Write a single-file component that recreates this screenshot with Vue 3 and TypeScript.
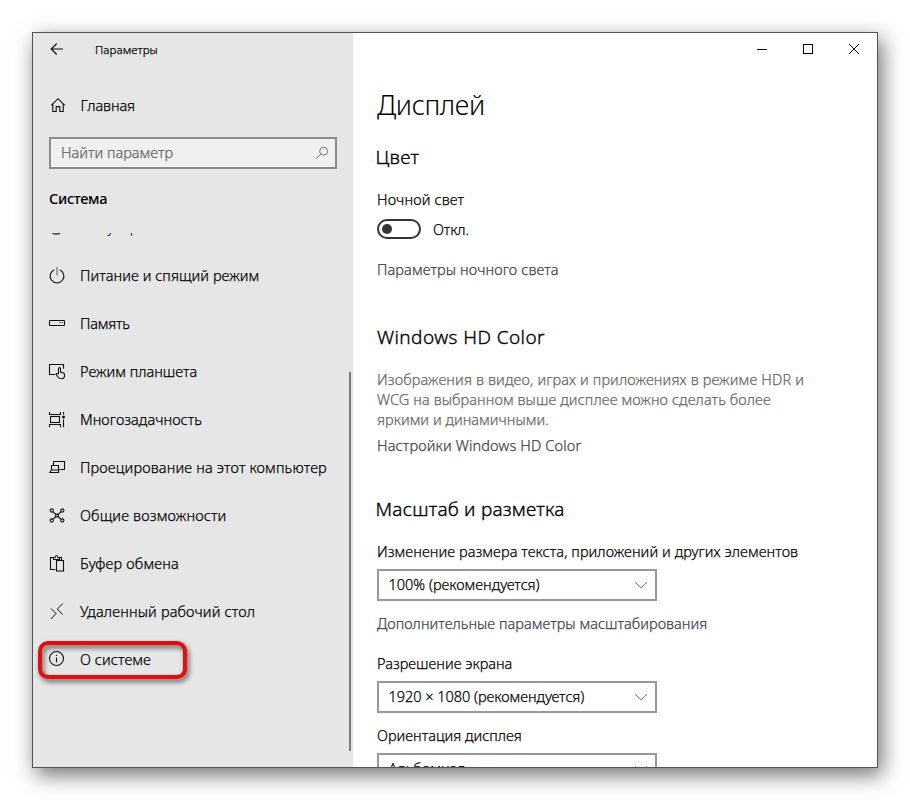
<script setup lang="ts">
interface NavItem {
  label: string
  icon: string
  spacing: number
  marked?: boolean
}

const items: NavItem[] = [
  { label: 'Фокусировка внимания', icon: 'moon', spacing: 0.12 },
  { label: 'Питание и спящий режим', icon: 'power', spacing: 0.06 },
  { label: 'Память', icon: 'storage', spacing: -0.2 },
  { label: 'Режим планшета', icon: 'tablet', spacing: 0.02 },
  { label: 'Многозадачность', icon: 'multitask', spacing: 0.06 },
  { label: 'Проецирование на этот компьютер', icon: 'project', spacing: 0.17 },
  { label: 'Общие возможности', icon: 'shared', spacing: 0.17 },
  { label: 'Буфер обмена', icon: 'clipboard', spacing: 0.18 },
  { label: 'Удаленный рабочий стол', icon: 'remote', spacing: 0.16 },
  { label: 'О системе', icon: 'info', spacing: 0.08, marked: true },
]
</script>

<template>
  <div class="desktop">
    <div class="window">
      <aside class="sidebar">
        <header class="titlebar">
          <svg class="back" width="14" height="14" viewBox="0 0 14 14">
            <path d="M13 7H1.5M6.7 1.5L1.2 7l5.5 5.5" />
          </svg>
          <span class="app-title">Параметры</span>
        </header>

        <a class="home">
          <svg class="home-icon" width="16" height="16" viewBox="0 0 16 16">
            <path d="M1.2 8.3L8 1.7l6.8 6.6M2.8 7v7.5h3.4V9.6h3.6v4.9h3.4V7" />
          </svg>
          <span class="home-label">Главная</span>
        </a>

        <div class="search">
          <span>Найти параметр</span>
          <svg width="14" height="14" viewBox="0 0 14 14">
            <circle cx="8.6" cy="5.2" r="4" />
            <path d="M5.7 8.1L1 12.8" />
          </svg>
        </div>

        <h2 class="section">Система</h2>

        <nav class="nav">
          <a v-for="item in items" :key="item.label" class="nav-item">
            <svg class="icon" width="16" height="16" viewBox="0 0 16 16">
              <path v-if="item.icon === 'moon'" d="M3.5 2a6.6 6.6 0 1 0 9.5 8.5A6.6 6.6 0 0 1 3.5 2z" />
              <template v-else-if="item.icon === 'power'">
                <path d="M5.3 1.7a6.9 6.9 0 1 0 5.4 0" />
                <path class="soft" d="M8 -1v8.5" />
              </template>
              <template v-else-if="item.icon === 'storage'">
                <rect x="0.5" y="4.5" width="15" height="5" rx="0.6" />
                <path d="M10.6 6.5h1M12.7 6.5h1" />
              </template>
              <template v-else-if="item.icon === 'tablet'">
                <path d="M6.2 10.5H0.5V0.5h14v4.3" />
                <path d="M9.5 9.8V4.5a1 1 0 0 1 2 0v3.6l2.3.5q1.7.3 1.7 1.9v1.300q0 3-3.200 3-2.200 0-3.400-1.800L7.200 10.500q-.3-1.300 1-1z" />
              </template>
              <template v-else-if="item.icon === 'multitask'">
                <rect x="1.5" y="4.5" width="9" height="6" />
                <path d="M0.5 0v2.5h11V0M0.5 15.2v-2.7h11v2.7M14.5 0v2.5M14.5 7.5v7.7" />
                <circle class="fill" cx="14.5" cy="5" r="1.5" />
              </template>
              <template v-else-if="item.icon === 'project'">
                <path d="M4.5 5.5v-4h11v8h-5.2" />
                <path d="M2.5 9.5v-4h7v4M0.8 12.5l1.6-2.5h7.2v2.5z" />
              </template>
              <template v-else-if="item.icon === 'shared'">
                <circle cx="2.7" cy="2.5" r="1.6" />
                <circle cx="13.3" cy="2.5" r="1.6" />
                <circle cx="2.7" cy="12.5" r="1.6" />
                <circle cx="13.3" cy="12.5" r="1.6" />
                <circle cx="8" cy="7.5" r="1.4" />
                <path d="M3.8 3.6l3.2 2.9M12.2 3.6L9 6.5M3.8 11.4L7 8.5M12.2 11.4L9 8.5" />
              </template>
              <template v-else-if="item.icon === 'clipboard'">
                <path d="M6.3 13.5H1.5v-12h3M10.5 1.5h2v3M4.5 3.5v-2h1.7Q6.3-.5 7.5-.5t1.3 2h1.7v2z" />
                <rect x="7.5" y="4.5" width="7" height="10.5" />
              </template>
              <path
                v-else-if="item.icon === 'remote'"
                class="thin"
                d="M2 4.5l5 5-5 5.5M13.8 -0.5L8.3 5l5.3 5.5"
              />
              <template v-else>
                <circle cx="7.5" cy="6.5" r="7" />
                <path d="M7.5 5.5v4.8M7.5 2.8v1.3" />
              </template>
            </svg>
            <span class="nav-label" :style="{ letterSpacing: item.spacing + 'px' }">{{ item.label }}</span>
            <i v-if="item.marked" class="marker"></i>
          </a>
          <span class="scrollbar"></span>
        </nav>
      </aside>

      <main class="content">
        <div class="controls">
          <svg width="46" height="32" viewBox="0 0 46 32"><path d="M18 16.5h10" /></svg>
          <svg width="46" height="32" viewBox="0 0 46 32"><rect x="18.5" y="11.5" width="9" height="9" /></svg>
          <svg width="46" height="32" viewBox="0 0 46 32"><path d="M18 11l10 10M28 11L18 21" /></svg>
        </div>

        <h1>Дисплей</h1>

        <h3 class="color-heading">Цвет</h3>
        <p class="night">Ночной свет</p>
        <div class="toggle-row">
          <span class="toggle"></span>
          <span class="toggle-text">Откл.</span>
        </div>
        <a class="link night-link">Параметры ночного света</a>

        <h3 class="hd-heading">Windows HD Color</h3>
        <p class="note">
          <span class="note-1">Изображения в видео, играх и приложениях в режиме HDR и</span>
          <span class="note-2">WCG на выбранном выше дисплее можно сделать более</span>
          <span class="note-3">яркими и динамичными.</span>
        </p>
        <a class="link hd-link">Настройки Windows HD Color</a>

        <h3 class="scale-heading">Масштаб и разметка</h3>
        <p class="scale-label">Изменение размера текста, приложений и других элементов</p>
        <div class="select">
          <span class="scale-value">100% (рекомендуется)</span>
          <svg width="14" height="8" viewBox="0 0 14 8"><path d="M1.2 1.2L7 6.8l5.8-5.6" /></svg>
        </div>
        <a class="link scale-link">Дополнительные параметры масштабирования</a>

        <p class="res-label">Разрешение экрана</p>
        <div class="select">
          <span class="res-value">1920 × 1080 (рекомендуется)</span>
          <svg width="14" height="8" viewBox="0 0 14 8"><path d="M1.2 1.2L7 6.8l5.8-5.6" /></svg>
        </div>

        <p class="orient-label">Ориентация дисплея</p>
        <div class="select">
          <span class="orient-value">Альбомная</span>
          <svg width="14" height="8" viewBox="0 0 14 8"><path d="M1.2 1.2L7 6.8l5.8-5.6" /></svg>
        </div>
      </main>
    </div>
  </div>
</template>

<style>
body {
  background: #fff;
  overflow: hidden;
}
</style>

<style scoped>
.desktop {
  box-sizing: border-box;
  height: 800px;
  padding: 32px;
  overflow: hidden;
  font: 300 14.5px/20px 'Noto Sans', 'Open Sans', sans-serif;
  color: #000;
  -webkit-text-stroke: 0.25px currentColor;
}

.window {
  box-sizing: border-box;
  display: flex;
  width: 846px;
  height: 736px;
  border: 1px solid #50555d;
  background: #fff;
  box-shadow: 4px 7px 20px rgba(0, 0, 0, 0.56);
}

svg {
  fill: none;
  stroke: #111;
  stroke-width: 1.1;
  flex: none;
  overflow: visible;
}

h1,
h2,
h3,
p {
  margin: 0;
  font-weight: 300;
  white-space: nowrap;
}

.sidebar {
  display: flex;
  flex-direction: column;
  width: 320px;
  height: 734px;
  flex: none;
  background: #e6e6e6;
}

.titlebar {
  display: flex;
  align-items: center;
  height: 32px;
  padding-left: 17px;
}

.app-title {
  margin: 2px 0 0 31px;
  font-size: 11.5px;
  letter-spacing: 0.09px;
}

.back {
  stroke-width: 1.2;
}

.home {
  display: flex;
  align-items: center;
  height: 48px;
  margin-top: 16px;
  padding-left: 17px;
}

.home-label {
  margin-left: 14.5px;
  letter-spacing: -0.1px;
}

.search {
  box-sizing: border-box;
  display: flex;
  align-items: center;
  justify-content: space-between;
  width: 288px;
  height: 32px;
  margin: 8px 0 0 16px;
  padding: 0 6px 0 10px;
  border: 2px solid #8b8b8b;
  background: #f0f0f0;
  color: #666;
  letter-spacing: 0.02px;
}

.search span {
  margin-top: -2px;
}

.search svg {
  stroke: #777;
  stroke-width: 1;
}

.section {
  margin: 19px 0 0 16px;
  font-size: 14.5px;
  font-weight: 550;
  letter-spacing: -0.32px;
  -webkit-text-stroke: 0;
}

.nav {
  position: relative;
  height: 534px;
  margin-top: 25px;
  overflow: hidden;
}

.nav-item {
  position: relative;
  display: flex;
  align-items: center;
  height: 48px;
  padding-left: 16px;
}

.nav-item:first-child {
  margin-top: -30px;
  -webkit-text-stroke: 0;
}

.icon {
  margin-top: 2px;
}

.nav-label {
  margin-left: 15px;
  white-space: nowrap;
}

.soft {
  stroke: #888;
  stroke-width: 1.5;
}

.thin {
  stroke-width: 1;
}

.fill {
  fill: #111;
  stroke: none;
}

.marker {
  position: absolute;
  box-sizing: border-box;
  left: 5px;
  top: 6px;
  width: 149px;
  height: 38px;
  border: 4px solid #e60d0b;
  border-radius: 10px;
  filter: drop-shadow(2px 3px 2.5px rgba(0, 0, 0, 0.6));
}

.scrollbar {
  position: absolute;
  right: 2px;
  top: 139px;
  width: 2px;
  height: 379px;
  background: #7a7a7a;
}

.content {
  box-sizing: border-box;
  display: flex;
  flex-direction: column;
  align-items: flex-start;
  flex: 1;
  height: 734px;
  padding-left: 24px;
  overflow: hidden;
}

.content > * {
  flex: none;
}

.controls {
  display: flex;
  align-self: flex-end;
}

.controls svg {
  stroke: #000;
  stroke-width: 1;
}

h1 {
  margin-top: 22px;
  font-size: 27px;
  line-height: 36px;
  letter-spacing: -0.38px;
  -webkit-text-stroke: 0;
}

h3 {
  font-size: 19px;
  line-height: 26px;
  -webkit-text-stroke: 0.35px currentColor;
}

.color-heading {
  margin: 21px 0 0 -1.5px;
  letter-spacing: 0.3px;
}

.night {
  margin-top: 19px;
  letter-spacing: 0.16px;
}

.toggle-row {
  display: flex;
  align-items: center;
  height: 20px;
  margin-top: 10px;
}

.toggle {
  box-sizing: border-box;
  display: flex;
  align-items: center;
  width: 44px;
  height: 20px;
  padding-left: 3px;
  border: 2px solid #333;
  border-radius: 10px;
}

.toggle::before {
  content: '';
  width: 10px;
  height: 10px;
  border-radius: 50%;
  background: #333;
}

.toggle-text {
  margin-left: 12px;
  letter-spacing: -0.1px;
}

.link {
  color: #3c414c;
  white-space: nowrap;
}

.night-link {
  margin-top: 20px;
  letter-spacing: 0.12px;
}

.hd-heading {
  margin-top: 45px;
  letter-spacing: 0.42px;
}

.note {
  display: flex;
  flex-direction: column;
  margin-top: 19px;
  color: #666;
}

.note-1 {
  letter-spacing: 0.15px;
}

.note-2 {
  letter-spacing: 0.095px;
}

.note-3 {
  letter-spacing: 0.03px;
}

.hd-link {
  margin-top: 6px;
  letter-spacing: 0.16px;
}

.scale-heading {
  margin: 41px 0 0 -1.5px;
  letter-spacing: 0.22px;
}

.scale-label {
  margin-top: 19px;
  letter-spacing: 0.08px;
}

.select {
  box-sizing: border-box;
  display: flex;
  align-items: center;
  justify-content: space-between;
  width: 280px;
  height: 32px;
  margin-top: 8px;
  padding: 0 7px 0 9.5px;
  border: 2px solid #999;
}

.select span {
  margin-top: -2px;
}

.select svg {
  stroke: #777;
  stroke-width: 1;
}

.scale-value {
  letter-spacing: 0;
}

.scale-link {
  margin-top: 12px;
  letter-spacing: 0.04px;
}

.res-label {
  margin-top: 20px;
  letter-spacing: 0.01px;
}

.res-value {
  letter-spacing: -0.03px;
}

.orient-label {
  margin-top: 12px;
  letter-spacing: 0.01px;
}

.orient-value {
  letter-spacing: 0.05px;
}
</style>
